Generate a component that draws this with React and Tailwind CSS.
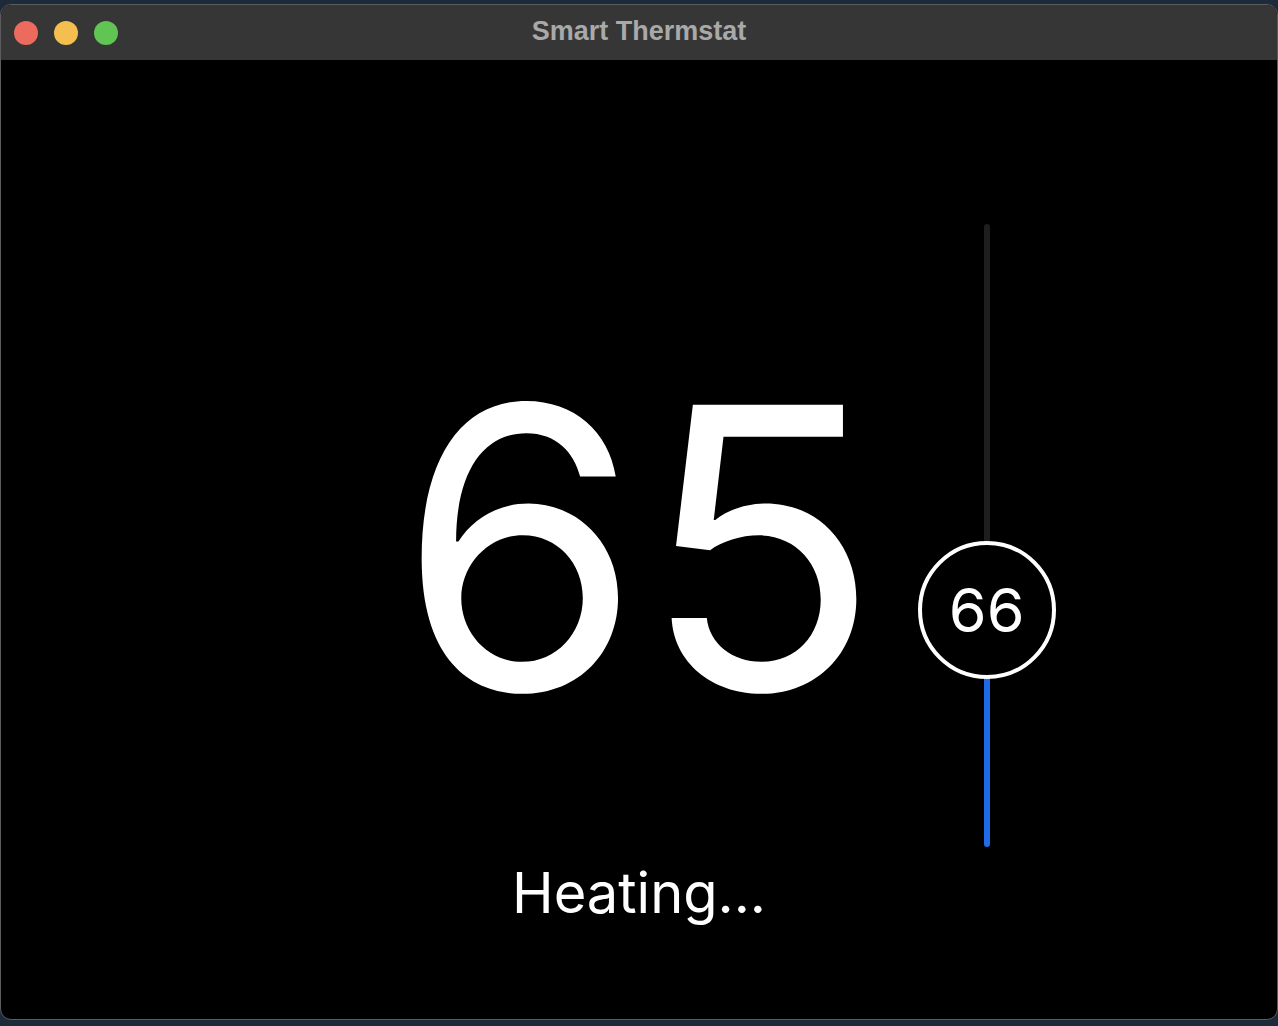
import React from 'react';

const TrafficLights = () => (
  <div className="flex items-center gap-4 pl-[13px]">
    <span className="w-6 h-6 rounded-full bg-[#ed6a5e]" />
    <span className="w-6 h-6 rounded-full bg-[#f5bf4f]" />
    <span className="w-6 h-6 rounded-full bg-[#61c554]" />
  </div>
);

const TempSlider = ({ target }) => (
  <div className="relative w-[138px] h-[623px] flex justify-center">
    <div className="w-[6px] h-full flex flex-col rounded-full overflow-hidden">
      <div className="flex-1 bg-[#1e1e1e]" />
      <div className="h-[237px] bg-[#1f6ce8]" />
    </div>
    {/* knob */}
    <div className="absolute left-0 top-[317px] w-[138px] h-[138px] rounded-full border-4 border-white bg-black flex items-center justify-center">
      <span className="text-white text-[61px] leading-none font-normal font-['Inter',sans-serif]">{target}</span>
    </div>
  </div>
);

export default function App() {
  const current = 65;
  const target = 66;

  return (
    <div className="w-[1278px] h-[1026px] bg-[#1d2a3a] pt-[4px] pb-[6px] font-['Liberation_Sans',Arial,sans-serif]">
      <div className="h-full rounded-[11px] border border-[#5c5c5c] overflow-hidden flex flex-col bg-black">
        <div className="relative h-[55px] shrink-0 bg-[#363636] flex items-center">
          <TrafficLights />
          <div className="absolute inset-0 flex items-center justify-center pb-[2px]">
            <span className="text-[#a9a9a9] text-[27px] font-bold">Smart Thermstat</span>
          </div>
        </div>

        <div className="flex-1 flex flex-col items-center pt-[164px]">
          <div className="w-full grid grid-cols-[1fr_auto_1fr]">
            <div />
            <div className="mt-[128px] text-white text-[392px] leading-none font-normal font-['Inter',sans-serif]">{current}</div>
            <div className="pl-[38px]">
              <TempSlider target={target} />
            </div>
          </div>
          <div className="mt-[18px] text-white text-[56px] leading-none font-['Inter',sans-serif]">Heating...</div>
        </div>
      </div>
    </div>
  );
}
